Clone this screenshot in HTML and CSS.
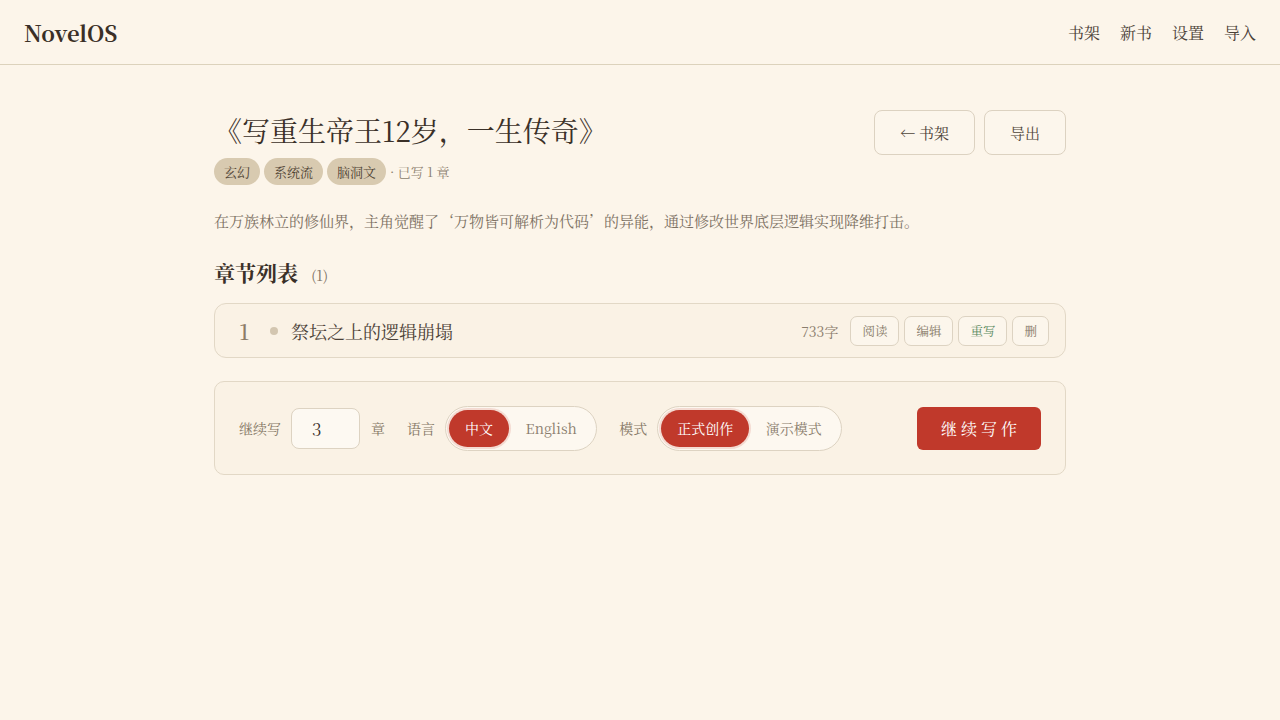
FILE: index.html
```html
<!DOCTYPE html>
<html lang="zh-CN">
<head>
    <meta charset="UTF-8">
    <meta name="viewport" content="width=device-width, initial-scale=1.0">
    <title>NovelOS - 写重生帝王12岁，一生传奇</title>
    <link rel="stylesheet" href="styles.css">
</head>
<body>
    <header class="topbar">
        <div class="logo">NovelOS</div>
        <nav>
            <ul>
                <li><a href="#">书架</a></li>
                <li><a href="#">新书</a></li>
                <li><a href="#">设置</a></li>
                <li><a href="#">导入</a></li>
            </ul>
        </nav>
    </header>

    <main class="container">
        <div class="book-head">
            <div class="book-info">
                <h1 class="book-title">《写重生帝王12岁，一生传奇》</h1>
                <div class="meta">
                    <span class="tag">玄幻</span>
                    <span class="tag">系统流</span>
                    <span class="tag">脑洞文</span>
                    <span class="meta-text">· 已写 1 章</span>
                </div>
            </div>
            <div class="head-actions">
                <a href="#" class="btn-outline">← 书架</a>
                <a href="#" class="btn-outline">导出</a>
            </div>
        </div>

        <p class="summary">在万族林立的修仙界，主角觉醒了‘万物皆可解析为代码’的异能，通过修改世界底层逻辑实现降维打击。</p>

        <h2 class="section-title">章节列表 <span class="count">(1)</span></h2>

        <div class="chapter-list">
            <div class="chapter">
                <span class="chapter-no">1</span>
                <span class="dot"></span>
                <span class="chapter-name">祭坛之上的逻辑崩塌</span>
                <span class="words">733字</span>
                <div class="chapter-actions">
                    <a href="#" class="mini-btn">阅读</a>
                    <a href="#" class="mini-btn">编辑</a>
                    <a href="#" class="mini-btn mini-green">重写</a>
                    <a href="#" class="mini-btn">删</a>
                </div>
            </div>
        </div>

        <div class="write-panel">
            <label class="lbl">继续写</label>
            <input type="text" class="num-input" value="3">
            <span class="lbl">章</span>
            <span class="lbl lbl-gap">语言</span>
            <div class="toggle">
                <button class="opt active">中文</button>
                <button class="opt">English</button>
            </div>
            <span class="lbl lbl-gap">模式</span>
            <div class="toggle">
                <button class="opt active">正式创作</button>
                <button class="opt">演示模式</button>
            </div>
            <button class="btn-primary">继续写作</button>
        </div>
    </main>
</body>
</html>
```

FILE: styles.css
```css
/* NovelOS 书籍详情页 */
body {
    margin: 0;
    background-color: #fcf5ea;
    color: #3b3128;
    font-family: "Noto Serif CJK SC", "Source Han Serif SC", "Noto Serif", "Liberation Serif", "Noto Sans CJK SC", serif;
}
a {
    text-decoration: none;
    color: inherit;
}

.topbar {
    height: 64px;
    padding: 0 24px;
    display: flex;
    justify-content: space-between;
    align-items: center;
    border-bottom: 1px solid #dcd2bc;
}
.logo {
    font-size: 22px;
    font-weight: 700;
    color: #3a2f26;
}
nav ul {
    list-style: none;
    margin: 0;
    padding: 0;
    display: flex;
    gap: 20px;
}
nav ul li a {
    font-size: 16px;
    color: #4a4036;
}

.container {
    width: 852px;
    margin: 0 auto;
    padding-top: 45px;
}

.book-head {
    display: flex;
    justify-content: space-between;
    align-items: flex-start;
}
.book-title {
    margin: 0 0 8px;
    font-size: 28px;
    font-weight: 400;
    line-height: 40px;
    color: #3a3028;
}
.meta {
    display: flex;
    align-items: center;
    gap: 4px;
}
.tag {
    background-color: #d8cab0;
    color: #4e4233;
    font-size: 13px;
    padding: 0 10px;
    height: 27px;
    line-height: 27px;
    border-radius: 14px;
}
.meta-text {
    font-size: 13px;
    color: #8a7d6d;
}
.head-actions {
    display: flex;
    gap: 9px;
}
.btn-outline {
    display: inline-flex;
    align-items: center;
    justify-content: center;
    height: 43px;
    padding: 0 25px;
    border: 1px solid #dcd2c1;
    border-radius: 8px;
    font-size: 15px;
    color: #4f453a;
    background-color: #fcf6ec;
}

.summary {
    margin: 24px 0 0;
    font-size: 15px;
    color: #7d7163;
    line-height: 24px;
}

.section-title {
    margin: 24px 0 13px;
    font-size: 21px;
    font-weight: 700;
    color: #3a3028;
    line-height: 30px;
}
.section-title .count {
    font-size: 14px;
    font-weight: 400;
    color: #7d7163;
    margin-left: 8px;
}

.chapter {
    display: flex;
    align-items: center;
    height: 53px;
    padding: 0 16px 0 24px;
    border: 1px solid #e2d8c6;
    border-radius: 12px;
    background-color: #faf2e5;
}
.chapter-no {
    font-size: 22px;
    font-weight: 500;
    color: #8c7c68;
    width: 24px;
}
.dot {
    width: 8px;
    height: 8px;
    border-radius: 50%;
    background-color: #d3c6b0;
    margin: 0 13px 0 7px;
}
.chapter-name {
    font-size: 18px;
    color: #4a4036;
    flex: 1;
}
.words {
    font-size: 14px;
    color: #8a7d6d;
    margin-right: 12px;
}
.chapter-actions {
    display: flex;
    gap: 5px;
}
.mini-btn {
    display: inline-flex;
    align-items: center;
    height: 28px;
    padding: 0 11px;
    border: 1px solid #ddd3c2;
    border-radius: 7px;
    font-size: 12.5px;
    color: #857866;
    background-color: #fcf6ec;
}
.mini-green {
    color: #5a8a5e;
}

.write-panel {
    margin-top: 23px;
    height: 92px;
    padding: 0 24px;
    display: flex;
    align-items: center;
    border: 1px solid #e2d8c6;
    border-radius: 10px;
    background-color: #faf2e5;
}
.lbl {
    font-size: 14px;
    color: #857866;
}
.lbl-gap {
    margin-left: 22px;
    margin-right: 10px;
}
.num-input {
    width: 69px;
    height: 41px;
    box-sizing: border-box;
    margin: 0 11px 0 10px;
    border: 1px solid #ddd3c2;
    border-radius: 8px;
    background-color: #fdf9f2;
    padding: 0 20px;
    font-family: inherit;
    font-size: 17px;
    color: #3a3028;
    outline: none;
}
.toggle {
    display: flex;
    align-items: center;
    height: 45px;
    box-sizing: border-box;
    padding: 3px;
    border: 1px solid #ddd3c2;
    border-radius: 23px;
    background-color: #fdf8f0;
}
.opt {
    height: 37px;
    padding: 0 16.5px;
    border: none;
    border-radius: 19px;
    background: none;
    font-family: inherit;
    font-size: 14px;
    color: #8a7d6d;
    cursor: pointer;
}
.opt.active {
    background-color: #c0392b;
    color: #fff;
    box-shadow: 0 0 0 2px rgba(192, 57, 43, 0.15);
    padding: 0 16px;
}
.btn-primary {
    margin-left: auto;
    height: 43px;
    padding: 0 20px 0 24px;
    border: none;
    border-radius: 6px;
    background-color: #c0392b;
    color: #fff;
    font-family: inherit;
    font-size: 16px;
    letter-spacing: 4px;
    cursor: pointer;
}
```
